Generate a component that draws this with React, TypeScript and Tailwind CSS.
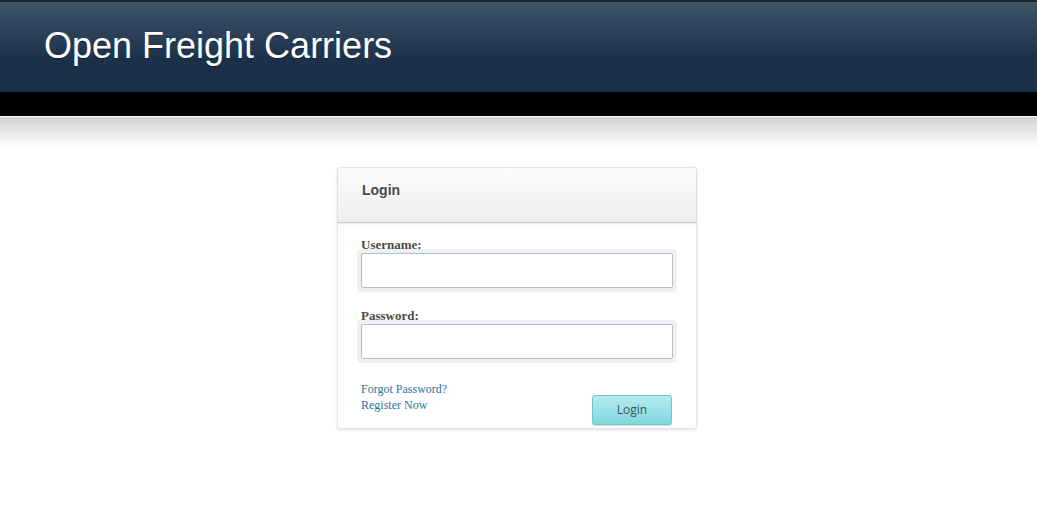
export default function App() {
  return (
    <div className="min-h-[522px] bg-white">
      {/* Header */}
      <div className="h-[2px] bg-[#23272c]" />
      <div className="flex h-[90px] items-center bg-gradient-to-b from-[#405469] via-[#1b314a] via-65% to-[#183049] px-[44px]">
        <h1
          className="pb-[2px] text-[36px] leading-none text-white [text-shadow:0_1px_1px_rgba(0,0,0,0.35)]"
          style={{ fontFamily: '"Liberation Sans", Arial, sans-serif' }}
        >
          Open Freight Carriers
        </h1>
      </div>
      <div className="h-[24px] bg-black" />
      <div className="h-px bg-white" />
      <div className="h-[30px] bg-gradient-to-b from-[#d2d2d2] to-white" />

      {/* Login card */}
      <div className="flex justify-center pt-[20px]">
        <div className="ml-[-3px] w-[360px] rounded-[3px] border border-[#e6e6e6] bg-white shadow-[0_1px_3px_rgba(0,0,0,0.12)]">
          <div className="flex h-[55px] items-center rounded-t-[3px] border-b border-[#cfcfcf] bg-gradient-to-b from-[#fbfbfb] to-[#efefef] px-[24px] shadow-[0_1px_2px_rgba(0,0,0,0.08)]">
            <span
              className="pb-[14px] pt-[4px] text-[14px] font-bold text-[#4a4a4a]"
              style={{ fontFamily: '"Liberation Sans", Arial, sans-serif' }}
            >
              Login
            </span>
          </div>

          <div className="px-[23px] pb-[3px] pt-[14px]" style={{ fontFamily: '"Liberation Serif", "Times New Roman", serif' }}>
            <label className="block text-[13px] font-bold leading-[16px] text-[#4d4a45]">Username:</label>
            <div className="mt-[-4px] rounded-[4px] bg-[#edf1f5] p-[4px] ml-[-4px] mr-[-4px]">
              <input type="text" className="block h-[35px] w-full rounded-[2px] border border-[#b9bcc0] bg-white outline-none" />
            </div>

            <label className="mt-[16px] block text-[13px] font-bold leading-[16px] text-[#4d4a45]">Password:</label>
            <div className="mt-[-4px] rounded-[4px] bg-[#edf1f5] p-[4px] ml-[-4px] mr-[-4px]">
              <input type="password" className="block h-[35px] w-full rounded-[2px] border border-[#b9bcc0] bg-white outline-none" />
            </div>

            <div className="mt-[18px] flex items-start justify-between">
              <div className="flex flex-col text-[12px] leading-[16px] text-[#2676a0]">
                <a href="#">Forgot Password?</a>
                <a href="#">Register Now</a>
              </div>
              <button
                className="mr-px mt-[14px] h-[30px] w-[80px] rounded-[3px] border border-[#6ec4ca] bg-gradient-to-b from-[#b4ecee] to-[#7dd7dd] text-[12px] text-[#3e5560] shadow-[0_1px_1px_rgba(0,0,0,0.12)]"
                style={{ fontFamily: '"Open Sans", Lato, sans-serif' }}
              >
                Login
              </button>
            </div>
          </div>
        </div>
      </div>
    </div>
  );
}
